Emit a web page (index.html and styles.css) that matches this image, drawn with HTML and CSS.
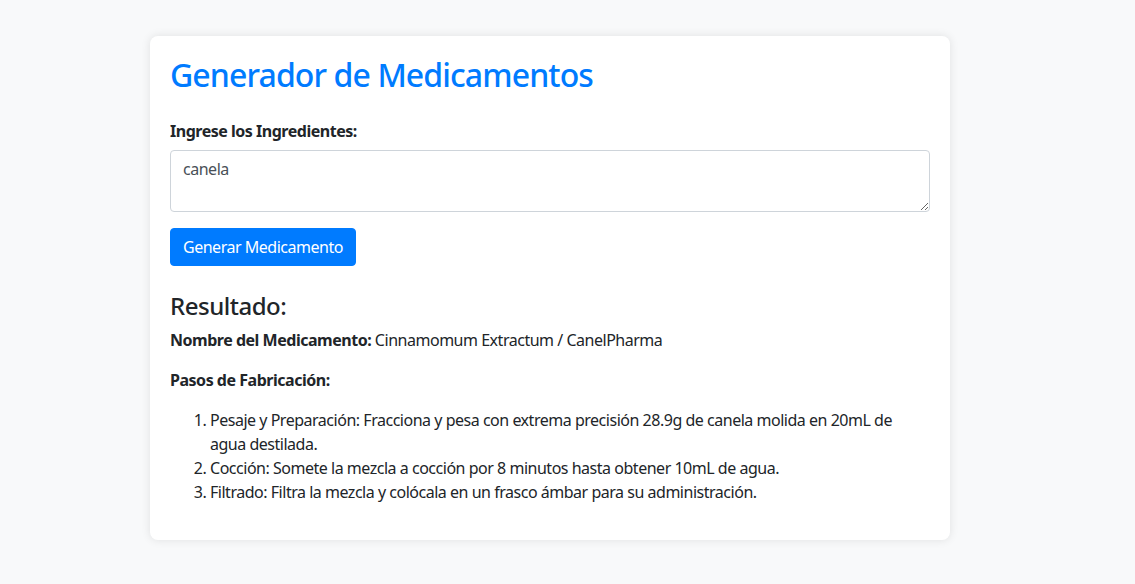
FILE: index.html
```html
<!DOCTYPE html>
<html lang="es">
<head>
<meta charset="utf-8">
<title>Generador de Medicamentos</title>
<link rel="stylesheet" href="styles.css">
</head>
<body>
<div class="container">
  <div class="card">
    <h1 class="title">Generador de Medicamentos</h1>
    <form class="form">
      <div class="form-group">
        <label class="label" for="ing">Ingrese los Ingredientes:</label>
        <textarea id="ing" class="textarea" rows="2">canela</textarea>
      </div>
      <button type="button" class="btn">Generar Medicamento</button>
    </form>
    <div class="result">
      <h4 class="result-title">Resultado:</h4>
      <p class="para"><strong>Nombre del Medicamento:</strong> Cinnamomum Extractum / CanelPharma</p>
      <p class="para"><strong>Pasos de Fabricación:</strong></p>
      <ol class="steps">
        <li>Pesaje y Preparación: Fracciona y pesa con extrema precisión 28.9g de canela molida en 20mL de agua destilada.</li>
        <li>Cocción: Somete la mezcla a cocción por 8 minutos hasta obtener 10mL de agua.</li>
        <li>Filtrado: Filtra la mezcla y colócala en un frasco ámbar para su administración.</li>
      </ol>
    </div>
  </div>
</div>
</body>
</html>
```
FILE: styles.css
```css
* { box-sizing: border-box; }
html, body { margin: 0; padding: 0; }
body {
  background: #f8f9fa;
  color: #212529;
  font-family: "Noto Sans", "Open Sans", sans-serif;
  font-size: 16px;
  line-height: 1.5;
  letter-spacing: -0.03em;
}
.container {
  width: 800px;
  margin: 36px 0 45px 150px;
}
.card {
  background: #fff;
  border-radius: 8px;
  box-shadow: 0 0 10px rgba(0, 0, 0, 0.1);
  padding: 20px;
}
.title {
  margin: 0 0 24.6px;
  font-size: 32px;
  font-weight: 500;
  line-height: 1.2;
  color: #007bff;
  letter-spacing: -0.028em;
}
.form-group { margin-bottom: 16px; }
.label {
  display: inline-block;
  font-weight: 700;
  margin-bottom: 7px;
}
.textarea {
  display: block;
  width: 100%;
  height: 62px;
  padding: 6px 12px;
  font: inherit;
  letter-spacing: inherit;
  line-height: 1.5;
  color: #495057;
  background: #fff;
  border: 1px solid #ced4da;
  border-radius: 4px;
}
.btn {
  display: inline-block;
  font: inherit;
  letter-spacing: inherit;
  line-height: 1.5;
  color: #fff;
  background: #007bff;
  border: 1px solid #007bff;
  border-radius: 4px;
  padding: 6px 12px;
  cursor: pointer;
}
.result { margin-top: 25.6px; }
.result-title {
  margin: 0 0 8px;
  font-size: 24px;
  font-weight: 500;
  line-height: 1.2;
}
.para { margin: 0 0 16px; }
.steps {
  margin: 0 0 16px;
  padding-left: 40px;
}
```
